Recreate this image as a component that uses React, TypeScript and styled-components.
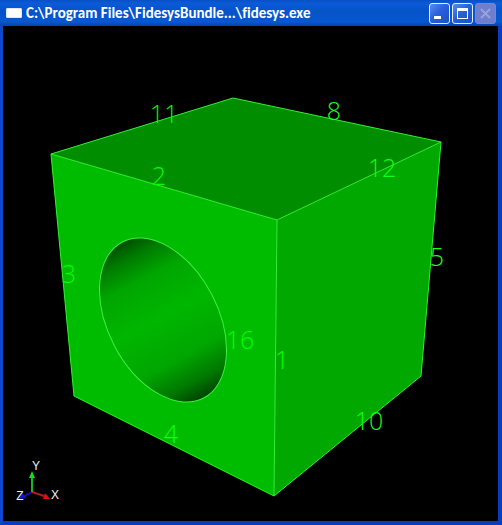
import React from "react";
import styled, { createGlobalStyle, css } from "styled-components";

const GlobalStyle = createGlobalStyle`
  *, *::before, *::after { box-sizing: border-box; }
  body { margin: 0; background: #000; }
`;

const Window = styled.main`
  display: flex;
  flex-direction: column;
  min-height: 100vh;
  background: #0a50d8;
`;

const TitleBar = styled.header`
  display: flex;
  align-items: center;
  gap: 4px;
  height: 26px;
  padding: 0 6px;
  background: linear-gradient(#0a4fc4 0, #0a5ad8 3px, #0653c8 12px, #0658d2 22px, #0440b0 100%);
`;

const AppIcon = styled.span`
  flex: none;
  width: 16px;
  height: 10px;
  border: 1px solid #dce8ff;
  border-radius: 1px;
  background: #fffef8;
`;

const Title = styled.h1`
  flex: 1;
  min-width: 0;
  margin: 0;
  overflow: hidden;
  color: #fff;
  font: bold 15px/20px Carlito, Lato, "Open Sans", sans-serif;
  font-variant-ligatures: none;
  text-overflow: ellipsis;
  white-space: nowrap;
`;

const Controls = styled.div`
  display: flex;
  gap: 2px;
`;

const ControlButton = styled.button`
  display: grid;
  place-items: center;
  width: 21px;
  height: 21px;
  padding: 0;
  border: 1px solid #e4ecff;
  border-radius: 3px;
  background: linear-gradient(135deg, #5a8cec, #2860dc 45%, #1c50c4);
  color: #fff;

  ${(p) =>
    p.disabled &&
    css`
      border-color: #7088dc;
      background: #6f7fce;
      color: #98a2dc;
    `}
`;

const Viewport = styled.section`
  flex: 1;
  display: flex;
  border: solid #0c48d0;
  border-width: 0 4px 4px 3px;
  border-right-color: #0a3cc0;
  border-bottom-color: #0a3cc0;
  background: #000;
`;

const Scene = styled.svg`
  flex: 1;
  min-width: 0;
  width: 100%;
  max-height: calc(100vh - 30px);
`;

const EdgeLabel = styled.text`
  fill: ${(p) => p.fill};
  font: 300 25px "Open Sans", "Noto Sans", sans-serif;
  text-anchor: middle;
`;

const AxisLabel = styled.text`
  fill: #eee;
  font: 12px "Liberation Sans", sans-serif;
  text-anchor: middle;
`;

const labels = [
  { text: "11", x: 164, y: 123, fill: "#00fa00" },
  { text: "8", x: 334, y: 120, fill: "#20ff20" },
  { text: "2", x: 159, y: 185, fill: "#00ff00" },
  { text: "12", x: 382, y: 177, fill: "#10ff10" },
  { text: "3", x: 69, y: 283, fill: "#00ff00" },
  { text: "5", x: 437, y: 266, fill: "#20ff20" },
  { text: "16", x: 240, y: 349, fill: "#00ff00" },
  { text: "1", x: 282, y: 369, fill: "#00ff00" },
  { text: "10", x: 369, y: 430, fill: "#10ff10" },
  { text: "4", x: 171, y: 443, fill: "#10ff10" },
];

function Cube() {
  return (
    <g strokeLinejoin="round">
      <polygon points="51,154 233,98 441,142 277,220" fill="#008e00" />
      <polygon points="277,220 441,142 421,376 274,496" fill="#00a800" />
      <polygon points="51,154 277,220 274,496 74,396" fill="#00bc00" />
      <ellipse
        cx="163"
        cy="320"
        rx="88"
        ry="55"
        transform="rotate(62.5 163 320)"
        fill="url(#bore)"
        stroke="#3cf03c"
      />
      <path
        d="M51 154 233 98 441 142 421 376 274 496 74 396ZM51 154 277 220 441 142M277 220 274 496"
        fill="none"
        stroke="#30f030"
      />
    </g>
  );
}

function Axes() {
  return (
    <g>
      <path d="M32 492 23 497" stroke="#1010c8" strokeWidth="2" />
      <path d="M19 499 22 493 27 498Z" fill="#1010d8" />
      <path d="M32 492 44 496" stroke="#a82020" strokeWidth="2" />
      <path d="M50 499 43 499 45 493Z" fill="#e01010" />
      <path d="M32 492V477" stroke="#10b828" strokeWidth="2" />
      <path d="M32 471 35 478H29Z" fill="#10e020" />
      <AxisLabel x="36" y="470">Y</AxisLabel>
      <AxisLabel x="55" y="499">X</AxisLabel>
      <AxisLabel x="20" y="500">Z</AxisLabel>
    </g>
  );
}

export default function App() {
  return (
    <>
      <GlobalStyle />
      <Window>
        <TitleBar>
          <AppIcon />
          <Title>C:\Program Files\FidesysBundle...\fidesys.exe</Title>
          <Controls>
            <ControlButton type="button" aria-label="Minimize">
              <svg width="19" height="19">
                <path d="M4 12H11V15H4Z" fill="currentColor" />
              </svg>
            </ControlButton>
            <ControlButton type="button" aria-label="Maximize">
              <svg width="19" height="19">
                <path d="M4 4H15V15H4ZM5 7V14H14V7Z" fill="currentColor" fillRule="evenodd" />
              </svg>
            </ControlButton>
            <ControlButton type="button" aria-label="Close" disabled>
              <svg width="19" height="19">
                <path d="M5 5 14 14M14 5 5 14" stroke="currentColor" strokeWidth="2" />
              </svg>
            </ControlButton>
          </Controls>
        </TitleBar>
        <Viewport>
          <Scene viewBox="3 26 495 495" role="img" aria-label="Cube with a circular hole and numbered edges">
            <defs>
              <linearGradient
                id="bore"
                gradientUnits="userSpaceOnUse"
                gradientTransform="rotate(-62.5 163 320)"
                x1="122"
                y1="243"
                x2="204"
                y2="397"
              >
                <stop offset="0" stopColor="#005000" />
                <stop offset="0.1" stopColor="#007c00" />
                <stop offset="0.24" stopColor="#00a600" />
                <stop offset="0.48" stopColor="#00b600" />
                <stop offset="0.74" stopColor="#00a600" />
                <stop offset="0.9" stopColor="#007800" />
                <stop offset="1" stopColor="#004400" />
              </linearGradient>
            </defs>
            <Cube />
            {labels.map((l) => (
              <EdgeLabel key={l.text} x={l.x} y={l.y} fill={l.fill}>
                {l.text}
              </EdgeLabel>
            ))}
            <Axes />
          </Scene>
        </Viewport>
      </Window>
    </>
  );
}
